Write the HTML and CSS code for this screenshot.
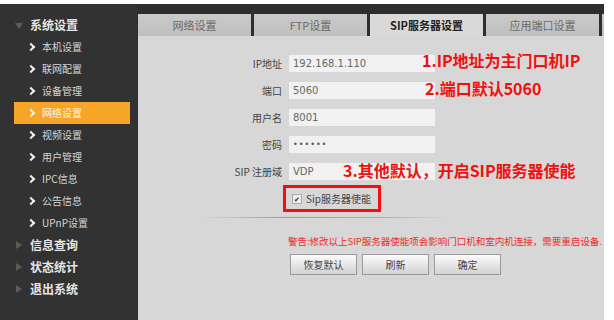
FILE: index.html
```html
<!DOCTYPE html>
<html lang="zh-CN">
<head>
    <meta charset="UTF-8">
    <title>SIP服务器设置</title>
    <link rel="stylesheet" href="styles.css">
</head>
<body>
    <div class="app">
        <div class="sidebar">
            <div class="group open">系统设置</div>
            <div class="item">本机设置</div>
            <div class="item">联网配置</div>
            <div class="item">设备管理</div>
            <div class="item active">网络设置</div>
            <div class="item">视频设置</div>
            <div class="item">用户管理</div>
            <div class="item">IPC信息</div>
            <div class="item">公告信息</div>
            <div class="item">UPnP设置</div>
            <div class="group">信息查询</div>
            <div class="group">状态统计</div>
            <div class="group">退出系统</div>
        </div>

        <div class="main">
            <div class="tabs">
                <div class="tab">网络设置</div>
                <div class="tab">FTP设置</div>
                <div class="tab current">SIP服务器设置</div>
                <div class="tab">应用端口设置</div>
                <div class="tab"></div>
            </div>

            <div class="panel">
                <div class="form">
                    <label>IP地址</label><div class="field">192.168.1.110</div>
                    <label>端口</label><div class="field">5060</div>
                    <label>用户名</label><div class="field">8001</div>
                    <label>密码</label><div class="field pass">••••••</div>
                    <label>SIP 注册域</label><div class="field">VDP</div>
                </div>

                <div class="enable">
                    <span class="check">✔</span>Sip服务器使能
                </div>

                <div class="divider"></div>

                <div class="actions">
                    <p class="warning">警告:修改以上SIP服务器使能项会影响门口机和室内机连接，需要重启设备.</p>
                    <div class="buttons">
                        <button class="btn">恢复默认</button>
                        <button class="btn">刷新</button>
                        <button class="btn">确定</button>
                    </div>
                </div>

                <!-- notes drawn over the form -->
                <div class="note note-ip">1.IP地址为主门口机IP</div>
                <div class="note note-port">2.端口默认5060</div>
                <div class="note note-sip">3.其他默认，开启SIP服务器使能</div>
            </div>
        </div>
    </div>
</body>
</html>
```

FILE: styles.css
```css
body {
    margin: 0;
    padding: 4px 0 0 0;
    background-color: #fff;
    font-family: "DejaVu Sans", "Noto Sans CJK SC", sans-serif;
    overflow: hidden;
}
.app {
    display: flex;
    width: 604px;
    height: 316px;
}

/* Sidebar menu */
.sidebar {
    width: 137px;
    background-color: #323232;
    padding-top: 10px;
    box-sizing: border-box;
}
.group {
    height: 22px;
    line-height: 22px;
    padding-left: 30px;
    position: relative;
    color: #e6e6e6;
    font-family: "Noto Sans CJK SC", sans-serif;
    font-size: 12px;
    font-weight: bold;
}
.group::before {
    content: "";
    position: absolute;
    left: 16px;
    top: 7px;
    border-left: 6px solid #5c5c5c;
    border-top: 4px solid transparent;
    border-bottom: 4px solid transparent;
}
.group.open::before {
    left: 15px;
    top: 9px;
    border-top: 6px solid #5c5c5c;
    border-left: 4px solid transparent;
    border-right: 4px solid transparent;
    border-bottom: none;
}
.item {
    height: 22px;
    line-height: 22px;
    padding-left: 42px;
    position: relative;
    color: #d4d4d4;
    font-family: "Noto Sans CJK SC", sans-serif;
    font-size: 10px;
}
.item::before {
    content: "";
    position: absolute;
    left: 28px;
    top: 8px;
    width: 4px;
    height: 4px;
    border-top: 2px solid #f0f0f0;
    border-right: 2px solid #f0f0f0;
    transform: rotate(45deg);
}
.item.active {
    margin: 0 7px 0 14px;
    padding-left: 28px;
    background-color: #f7a529;
    color: #fff7e6;
}
.item.active::before {
    left: 14px;
    border-color: #fff3d8;
}

/* Main area */
.main {
    flex: 1;
    background-color: #2e2e2e;
    padding: 10px 0 0 1px;
    display: flex;
    flex-direction: column;
    overflow: hidden;
}
.tabs {
    display: flex;
    gap: 3px;
    height: 22px;
    flex-shrink: 0;
}
.tab {
    flex: 0 0 113px;
    background: linear-gradient(#cacaca, #bfbfbf);
    color: #6a6a6a;
    font-family: "Noto Sans CJK SC", sans-serif;
    font-size: 11px;
    line-height: 22px;
    text-align: center;
}
.tab.current {
    background: #d9d9d9;
    color: #222;
    font-weight: bold;
}
.panel {
    flex: 1;
    background-color: #d7d7d7;
    padding-top: 19px;
    position: relative;
}

/* Form */
.form {
    display: grid;
    grid-template-columns: 144px 146px;
    column-gap: 7px;
    row-gap: 10px;
}
.form label {
    text-align: right;
    font-family: "Noto Sans CJK SC", sans-serif;
    font-size: 10px;
    line-height: 17px;
    color: #444;
}
.field {
    height: 17px;
    line-height: 17px;
    background-color: #f1f1f1;
    padding-left: 4px;
    font-size: 10px;
    color: #666;
}
.field.pass {
    font-size: 8px;
    letter-spacing: 1px;
    color: #555;
}
.enable {
    width: 98px;
    height: 27px;
    box-sizing: border-box;
    margin: 5px 0 0 145px;
    border: 3px solid #ee1111;
    display: flex;
    align-items: center;
    padding-left: 6px;
    font-family: "Noto Sans CJK SC", sans-serif;
    font-size: 10px;
    color: #444;
}
.check {
    width: 8px;
    height: 8px;
    margin-right: 4px;
    background-color: #eee;
    border: 1px solid #aaa;
    font-size: 7px;
    line-height: 8px;
    text-align: center;
    color: #222;
}
.divider {
    height: 1px;
    margin: 5px 0 0 60px;
    width: 250px;
    background: linear-gradient(to right, rgba(150,150,150,0), #9c9c9c 35%, #b0b0b0 75%, rgba(180,180,180,0));
}
.actions {
    padding-left: 150px;
}
.warning {
    margin: 16px 0 0 0;
    font-family: "Noto Sans CJK SC", sans-serif;
    font-size: 9.6px;
    line-height: 14px;
    color: #ee2a2a;
    white-space: nowrap;
    letter-spacing: -0.1px;
}
.buttons {
    display: flex;
    gap: 5px;
    margin: 6px 0 0 2px;
}
.btn {
    width: 67px;
    height: 21px;
    padding: 0;
    border: 1px solid #9a9a9a;
    background: linear-gradient(#fbfbfb, #d2d2d2);
    font-family: "Noto Sans CJK SC", sans-serif;
    font-size: 10px;
    color: #444;
}

/* Red notes over the form */
.note {
    position: absolute;
    color: #ee1111;
    font-family: "Noto Sans CJK SC", sans-serif;
    font-size: 16px;
    font-weight: bold;
    line-height: 20px;
    white-space: nowrap;
}
.note-ip {
    left: 284px;
    top: 14px;
}
.note-port {
    left: 287px;
    top: 42px;
}
.note-sip {
    left: 205px;
    top: 124px;
}
```
